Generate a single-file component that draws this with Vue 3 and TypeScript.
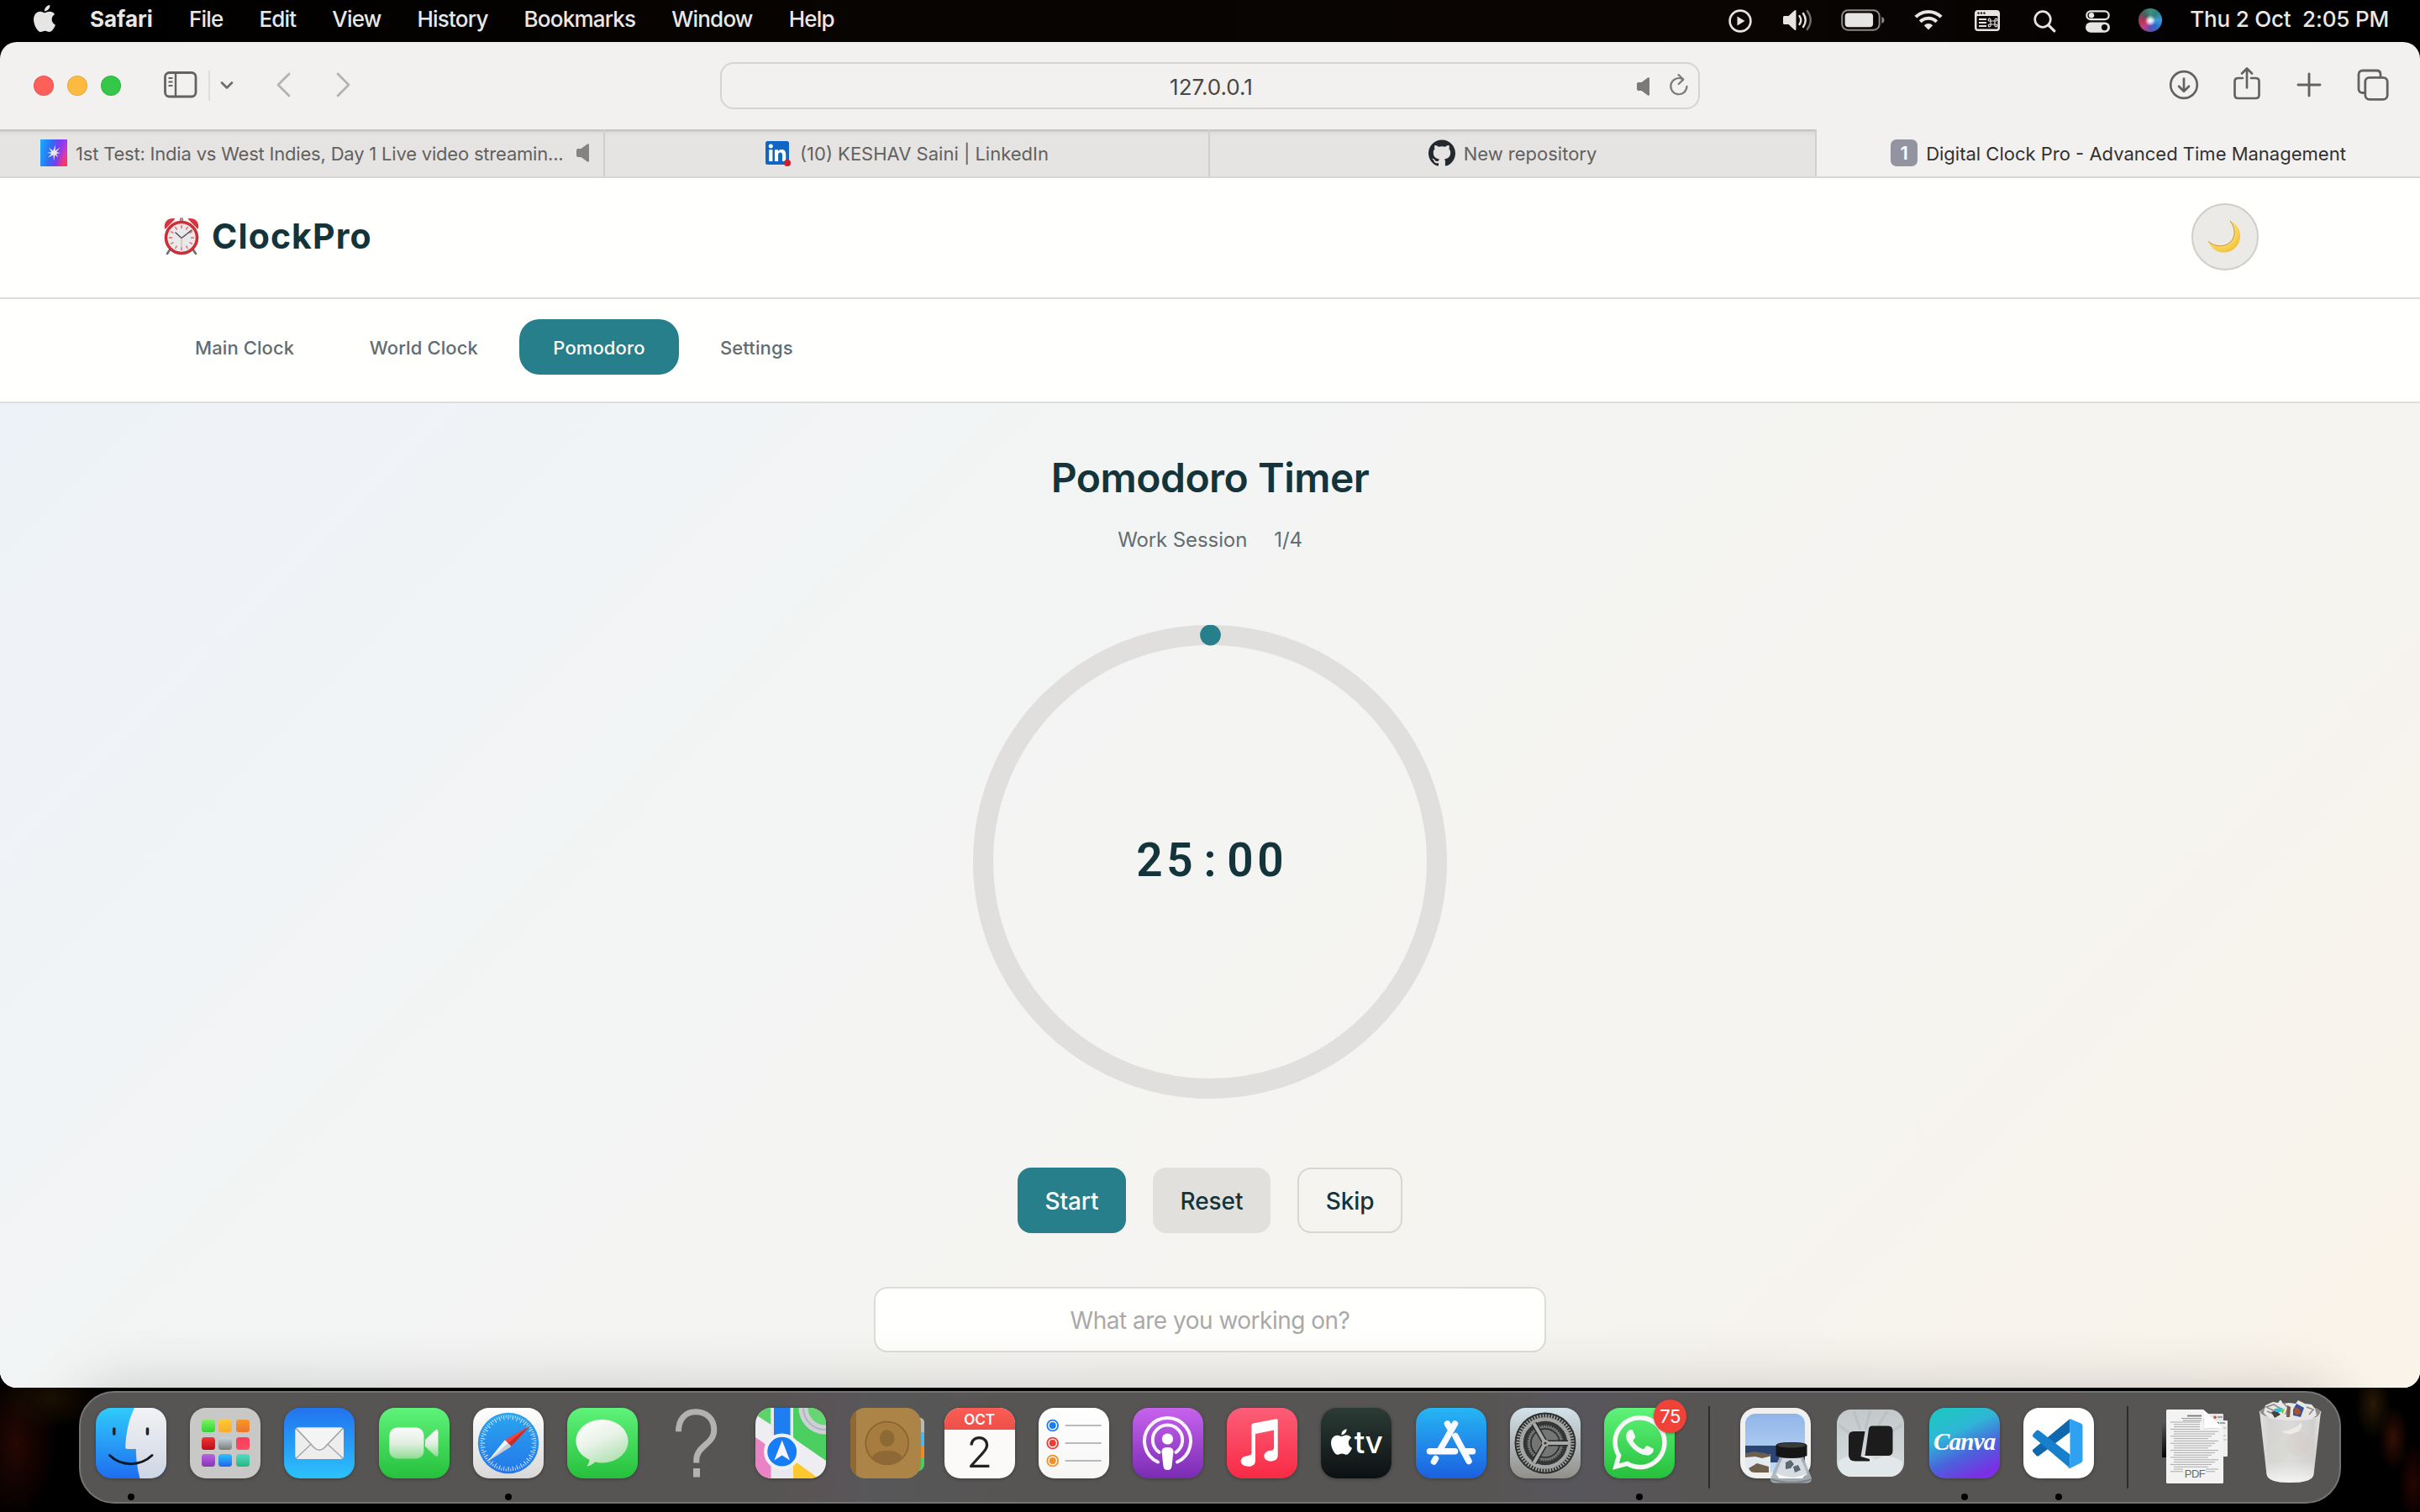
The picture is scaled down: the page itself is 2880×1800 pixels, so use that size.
<script setup lang="ts">
interface NavTab {
  label: string
  active?: boolean
}

const menus: string[] = ['File', 'Edit', 'View', 'History', 'Bookmarks', 'Window', 'Help']

const navTabs: NavTab[] = [
  { label: 'Main Clock' },
  { label: 'World Clock' },
  { label: 'Pomodoro', active: true },
  { label: 'Settings' },
]

const timeDigits: string[] = '25:00'.split('')

const launchpad: string[] = [
  'lime', 'amber', 'orange',
  'red', 'steel', 'pink',
  'violet', 'blue', 'teal',
]

// Tick marks round the compass dial
const compassTicks: number[] = Array.from({ length: 72 }, (_, i) => i * 5)
const alarmTicks: number[] = Array.from({ length: 12 }, (_, i) => i * 30)
const docLines: number[] = Array.from({ length: 22 }, (_, i) => 12 + i * 2.8)

const applePath =
  'M12.152 6.896c-.948 0-2.415-1.078-3.96-1.04-2.04.027-3.91 1.183-4.961 3.014-2.117 3.675-.546 9.103 1.519 12.09 1.013 1.454 2.208 3.09 3.792 3.039 1.52-.065 2.09-.987 3.935-.987 1.831 0 2.35.987 3.96.948 1.637-.026 2.676-1.48 3.676-2.948 1.156-1.688 1.636-3.325 1.662-3.415-.039-.013-3.182-1.221-3.22-4.857-.026-3.04 2.48-4.494 2.597-4.559-1.429-2.09-3.623-2.324-4.39-2.376-2-.156-3.675 1.09-4.61 1.09zM15.53 3.83c.843-1.012 1.4-2.427 1.245-3.83-1.207.052-2.662.805-3.532 1.818-.78.896-1.454 2.338-1.273 3.714 1.338.104 2.715-.688 3.559-1.701'
const githubPath =
  'M12 .297c-6.63 0-12 5.373-12 12 0 5.303 3.438 9.8 8.205 11.385.6.113.82-.258.82-.577 0-.285-.01-1.04-.015-2.04-3.338.724-4.042-1.61-4.042-1.61C4.422 18.07 3.633 17.7 3.633 17.7c-1.087-.744.084-.729.084-.729 1.205.084 1.838 1.236 1.838 1.236 1.07 1.835 2.809 1.305 3.495.998.108-.776.417-1.305.76-1.605-2.665-.3-5.466-1.332-5.466-5.93 0-1.31.465-2.38 1.235-3.22-.135-.303-.54-1.523.105-3.176 0 0 1.005-.322 3.3 1.23.96-.267 1.98-.399 3-.405 1.02.006 2.04.138 3 .405 2.28-1.552 3.285-1.23 3.285-1.23.645 1.653.24 2.873.12 3.176.765.84 1.23 1.91 1.23 3.22 0 4.61-2.805 5.625-5.475 5.92.42.36.81 1.096.81 2.22 0 1.606-.015 2.896-.015 3.286 0 .315.21.69.825.57C20.565 22.092 24 17.592 24 12.297c0-6.627-5.373-12-12-12'
const whatsappPath =
  'M17.472 14.382c-.297-.149-1.758-.867-2.03-.967-.273-.099-.471-.148-.67.15-.197.297-.767.966-.94 1.164-.173.199-.347.223-.644.075-.297-.15-1.255-.463-2.39-1.475-.883-.788-1.48-1.761-1.653-2.059-.173-.297-.018-.458.13-.606.134-.133.298-.347.446-.52.149-.174.198-.298.298-.497.099-.198.05-.371-.025-.52-.075-.149-.669-1.612-.916-2.207-.242-.579-.487-.5-.669-.51-.173-.008-.371-.01-.57-.01-.198 0-.52.074-.792.372-.272.297-1.04 1.016-1.04 2.479 0 1.462 1.065 2.875 1.213 3.074.149.198 2.096 3.2 5.077 4.487.709.306 1.262.489 1.694.625.712.227 1.36.195 1.871.118.571-.085 1.758-.719 2.006-1.413.248-.694.248-1.289.173-1.413-.074-.124-.272-.198-.57-.347m-5.421 7.403h-.004a9.87 9.87 0 01-5.031-1.378l-.361-.214-3.741.982.998-3.648-.235-.374a9.86 9.86 0 01-1.51-5.26c.001-5.45 4.436-9.884 9.888-9.884 2.64 0 5.122 1.03 6.988 2.898a9.825 9.825 0 012.893 6.994c-.003 5.45-4.437 9.884-9.885 9.884m8.413-18.297A11.815 11.815 0 0012.05 0C5.495 0 .16 5.335.157 11.892c0 2.096.547 4.142 1.588 5.945L.057 24l6.305-1.654a11.882 11.882 0 005.683 1.448h.005c6.554 0 11.89-5.335 11.893-11.893a11.821 11.821 0 00-3.48-8.413Z'
</script>

<template>
  <div class="screen">
    <!-- macOS menu bar -->
    <header class="menubar">
      <svg class="apple" viewBox="2.2 0 19.6 24" preserveAspectRatio="none"><path :d="applePath" fill="#e6e5e4" /></svg>
      <nav class="menus">
        <span class="menu app">Safari</span>
        <span v-for="m in menus" :key="m" class="menu">{{ m }}</span>
      </nav>
      <div class="status">
        <svg class="st play" viewBox="0 0 28 28">
          <circle cx="14" cy="14" r="12.4" fill="none" stroke="#e6e5e4" stroke-width="2.6" />
          <path d="M10.5 8.6v10.8l9-5.4z" fill="#e6e5e4" />
        </svg>
        <svg class="st volume" viewBox="0 0 38 28">
          <path d="M1 10.5q0-1.5 1.5-1.5h5l7-6.4q2-1.4 2 .9v21q0 2.300-2 .9l-7-6.400h-5q-1.500 0-1.500-1.500z" fill="#e6e5e4" />
          <path d="M20.500 9q3.500 5 0 10M25 6q5.500 8 0 16" fill="none" stroke="#e6e5e4" stroke-width="2.400" stroke-linecap="round" />
          <path d="M29.800 3q8 11 0 22" fill="none" stroke="#6e6c6a" stroke-width="2.400" stroke-linecap="round" />
        </svg>
        <svg class="st battery" viewBox="0 0 52 26">
          <rect x="1.200" y="1.200" width="44.500" height="23.500" rx="7" fill="none" stroke="#8b8987" stroke-width="2" />
          <rect x="4.600" y="4.600" width="33.500" height="16.700" rx="4" fill="#e6e5e4" />
          <path d="M48.300 9q3.200 1.200 3.200 4t-3.200 4z" fill="#8b8987" />
        </svg>
        <svg class="st wifi" viewBox="0 0 34 25">
          <g fill="none" stroke="#e6e5e4" stroke-width="4">
            <path d="M1.800 9.200a21.500 21.500 0 0 1 30.400 0" />
            <path d="M7.300 14.800a13.700 13.700 0 0 1 19.400 0" />
          </g>
          <path d="M17 24.500l-5.200-5.300a7.400 7.400 0 0 1 10.400 0z" fill="#e6e5e4" />
        </svg>
        <svg class="st keys" viewBox="0 0 30 25">
          <rect width="30" height="25" rx="4" fill="#e6e5e4" />
          <rect x="2.500" y="7" width="25" height="15.500" rx="1" fill="#0a0503" />
          <circle cx="4.500" cy="3.600" r="1.200" fill="#0a0503" /><circle cx="8" cy="3.600" r="1.200" fill="#0a0503" /><circle cx="11.500" cy="3.600" r="1.200" fill="#0a0503" />
          <path d="M5 11h9M5 15h9M5 19h9" stroke="#e6e5e4" stroke-width="2" />
          <path d="M19 13h5v4h-5zM19 13h-1.200a1.400 1.400 0 1 1 1.200-1.400zM24 13h1.200a1.400 1.400 0 1 0-1.200-1.400zM19 17h-1.200a1.400 1.400 0 1 0 1.200 1.400zM24 17h1.200a1.400 1.400 0 1 1-1.200 1.400z" fill="none" stroke="#e6e5e4" stroke-width="1.200" />
        </svg>
        <svg class="st search" viewBox="0 0 27 27">
          <circle cx="11" cy="11" r="9.300" fill="none" stroke="#e6e5e4" stroke-width="2.700" />
          <path d="M17.800 17.800l7 7" stroke="#e6e5e4" stroke-width="3.200" stroke-linecap="round" />
        </svg>
        <svg class="st toggles" viewBox="0 0 29 27">
          <rect x="1.300" y="1.300" width="26.400" height="9.800" rx="4.900" fill="none" stroke="#e6e5e4" stroke-width="2.200" />
          <circle cx="7" cy="6.200" r="3.200" fill="#e6e5e4" />
          <rect y="14.500" width="29" height="12.300" rx="6.150" fill="#e6e5e4" />
          <circle cx="22.500" cy="20.600" r="3.600" fill="#0a0503" />
        </svg>
        <span class="siri"></span>
        <span class="clock">Thu 2 Oct&nbsp; 2:05 PM</span>
      </div>
    </header>

    <!-- Safari window -->
    <section class="window">
      <div class="toolbar">
        <div class="lights"><i class="r"></i><i class="y"></i><i class="g"></i></div>
        <svg class="sidebar" viewBox="0 0 40 32">
          <rect x="1.500" y="1.500" width="36.500" height="28.500" rx="5" fill="none" stroke="#636261" stroke-width="2.800" />
          <path d="M14 2v28" stroke="#636261" stroke-width="2.400" />
          <path d="M5.500 8h5M5.500 12.500h5M5.500 17h5" stroke="#636261" stroke-width="1.800" />
        </svg>
        <span class="vline"></span>
        <svg class="chev" viewBox="0 0 16 12"><path d="M2 2.500l6 6 6-6" fill="none" stroke="#6f6e75" stroke-width="2.800" stroke-linecap="round" stroke-linejoin="round" /></svg>
        <svg class="back" viewBox="0 0 18 30"><path d="M16 2L3 15l13 13" fill="none" stroke="#b3b2b0" stroke-width="2.800" stroke-linecap="round" stroke-linejoin="round" /></svg>
        <svg class="fwd" viewBox="0 0 18 30"><path d="M2 2l13 13L2 28" fill="none" stroke="#b3b2b0" stroke-width="2.800" stroke-linecap="round" stroke-linejoin="round" /></svg>
        <div class="url">
          <span class="host">127.0.0.1</span>
          <div class="url-tools">
            <svg class="mute" viewBox="0 0 15 22"><path d="M0 8q0-2 2-2h3.500l7.500-5.500q2-1 2 1v19q0 2-2 1l-7.500-5.500H2q-2 0-2-2z" fill="#7b7a79" /></svg>
            <svg class="reload" viewBox="0 0 24 27">
              <path d="M16.500 6.200a9.600 9.600 0 1 0 5 8.600" fill="none" stroke="#7b7a79" stroke-width="2.200" stroke-linecap="round" />
              <path d="M11.500 1l5.800 5.600-5.600 5.400" fill="none" stroke="#7b7a79" stroke-width="2.200" stroke-linecap="round" stroke-linejoin="round" />
            </svg>
          </div>
        </div>
        <div class="actions">
          <svg class="a1" viewBox="0 0 36 36" fill="none" stroke="#636261" stroke-width="2.700" stroke-linecap="round" stroke-linejoin="round">
            <circle cx="18" cy="18" r="15.800" /><path d="M18 10.500v15M12 19.800l6 6 6-6" />
          </svg>
          <svg class="a2" viewBox="0 0 34 40" fill="none" stroke="#636261" stroke-width="2.700" stroke-linecap="round" stroke-linejoin="round">
            <path d="M12 14H6.500q-4 0-4 4v16q0 4 4 4h21q4 0 4-4V18q0-4-4-4H22M17 25.500V2.500M11 8.500l6-6 6 6" />
          </svg>
          <svg class="a3" viewBox="0 0 30 30" stroke="#636261" stroke-width="2.900" stroke-linecap="round"><path d="M15 2v26M2 15h26" /></svg>
          <svg class="a4" viewBox="0 0 38 38" fill="none" stroke="#636261" stroke-width="2.800" stroke-linejoin="round">
            <path d="M9.500 28.500H7q-5 0-5-5V7q0-5 5-5h16.500q4.500 0 4.500 4.500V9" /><rect x="9.800" y="10.300" width="26.400" height="26" rx="5" />
          </svg>
        </div>
      </div>

      <div class="tabs">
        <div class="tab t1">
          <span class="fav hotstar">
            <svg viewBox="0 0 32 32"><path d="M18 6.500l-.3 7 5.800-4-4.300 5.600 4.600 1-4.800 1.200 2.400 4-4-2.800-1.400 7-.5-7L9 21.500l4.200-4.500-5.200-1.200 5.200-.8-3-5 5 3.500z" fill="#ece6e8" /></svg>
          </span>
          <span class="tt">1st Test: India vs West Indies, Day 1 Live video streamin...</span>
          <svg class="mute tab-mute" viewBox="0 0 15 22"><path d="M0 8q0-2 2-2h3.500l7.500-5.500q2-1 2 1v19q0 2-2 1l-7.500-5.500H2q-2 0-2-2z" fill="#848382" /></svg>
        </div>
        <div class="tab t2">
          <svg class="fav linkedin" viewBox="0 0 32 32">
            <rect x="1" y="2" width="28" height="28" rx="2.500" fill="#0f66c3" />
            <circle cx="7.300" cy="8" r="2.500" fill="#fff" />
            <path d="M5.200 12.300h4.200V26H5.200zM12 12.300h4v1.900c1-1.500 2.300-2.200 4.200-2.200 3.800 0 5 2.400 5 6.200V26H21v-7c0-2-.5-3.400-2.300-3.400-1.900 0-2.600 1.400-2.600 3.400v7H12z" fill="#fff" />
            <circle cx="27" cy="28" r="4" fill="#cf2027" />
          </svg>
          <span class="tt">(10) KESHAV Saini | LinkedIn</span>
        </div>
        <div class="tab t3">
          <svg class="fav github" viewBox="0 0 24 24"><path :d="githubPath" fill="#24292f" /></svg>
          <span class="tt">New repository</span>
        </div>
        <div class="tab t4">
          <span class="fav one">1</span>
          <span class="tt">Digital Clock Pro - Advanced Time Management</span>
        </div>
      </div>

      <!-- ClockPro page -->
      <div class="page">
        <div class="brandbar">
          <div class="brand">
            <svg class="alarm" viewBox="0 0 44 46">
              <path d="M9 38l-4 6M35 38l4 6" stroke="#6d6e72" stroke-width="2.600" stroke-linecap="round" />
              <path d="M20.500 5V1.800h3V5" fill="#c9a7a9" stroke="#b06a6e" />
              <path d="M2.500 15C-.5 7.500 6 0 14.500 2.500z" fill="#d8343f" /><path d="M41.500 15C44.500 7.500 38 0 29.500 2.500z" fill="#d8343f" />
              <circle cx="22" cy="25" r="18.400" fill="#e9e9e9" stroke="#cf2f39" stroke-width="3.400" />
              <circle cx="22" cy="25" r="20" fill="none" stroke="#8f1b24" stroke-width=".8" opacity=".5" />
              <path v-for="a in alarmTicks" :key="a" d="M22 10v4" :transform="`rotate(${a} 22 25)`" stroke="#e0565e" stroke-width="1.300" />
              <path d="M22 25.500l-7-6.500M22 25.500L34 16" stroke="#4c4d52" stroke-width="1.500" stroke-linecap="round" />
              <path d="M22 25v12" stroke="#cfa9a0" stroke-width="1" />
            </svg>
            <span class="brand-name">ClockPro</span>
          </div>
          <button class="theme">
            <svg viewBox="0 0 40 40">
              <defs><radialGradient id="moonFill" cx=".35" cy=".3" r=".8"><stop offset=".5" stop-color="#fbe07a" /><stop offset=".8" stop-color="#f5cb45" /><stop offset="1" stop-color="#edb83a" /></radialGradient></defs>
              <path d="M27 .8C38.500 6 42.500 19.500 36 29.500 28.500 41.500 8.500 43 1 25.500 9.500 32.500 20.500 32.500 27.500 26 34 19.500 33.500 9.500 27 .8z" fill="url(#moonFill)" />
              <path d="M27 .8C33.500 9.500 34 19.500 27.500 26 20.500 32.500 9.500 32.500 1 25.500" fill="none" stroke="#c99239" stroke-width="1" />
            </svg>
          </button>
        </div>

        <nav class="pagenav">
          <button v-for="t in navTabs" :key="t.label" class="navbtn" :class="{ active: t.active }">{{ t.label }}</button>
        </nav>

        <main class="main">
          <h1 class="title">Pomodoro Timer</h1>
          <p class="session"><span class="s1">Work Session</span><span class="s2">1/4</span></p>
          <div class="ring">
            <svg viewBox="0 0 564 564">
              <circle cx="282" cy="282" r="270" fill="none" stroke="#e0dfdd" stroke-width="24" />
              <circle cx="282.500" cy="12" r="12.400" fill="#277f8b" />
            </svg>
            <div class="time"><span v-for="(d, i) in timeDigits" :key="i" class="digit">{{ d }}</span></div>
          </div>
          <div class="controls">
            <button class="btn start">Start</button>
            <button class="btn reset">Reset</button>
            <button class="btn skip">Skip</button>
          </div>
          <input class="task" type="text" placeholder="What are you working on?" />
        </main>
      </div>
    </section>

    <!-- Dock -->
    <footer class="dock">
      <div class="icon finder running">
        <svg viewBox="0 0 84 84">
          <defs>
            <linearGradient id="fl" x2="0" y2="1"><stop stop-color="#2fcbfb" /><stop offset="1" stop-color="#1f6df1" /></linearGradient>
            <linearGradient id="fr" x2="0" y2="1"><stop stop-color="#f3f2f5" /><stop offset="1" stop-color="#cdd6e4" /></linearGradient>
          </defs>
          <rect width="84" height="84" rx="19" fill="url(#fl)" />
          <path d="M46 0H65a19 19 0 0 1 19 19V65a19 19 0 0 1-19 19H52.500C49.500 72 48 62 47.800 49H37.500Q35 49 35.200 46C36 28 40 12 46 0z" fill="url(#fr)" />
          <path d="M21.800 25v6M61.500 25v6" stroke="#20242c" stroke-width="3.600" stroke-linecap="round" />
          <path d="M16.500 56.500C30 70 53 70 67 56.500" fill="none" stroke="#14181f" stroke-width="3" stroke-linecap="round" />
        </svg>
      </div>
      <div class="icon launch">
        <div class="grid9"><i v-for="c in launchpad" :key="c" :class="c"></i></div>
      </div>
      <div class="icon mail">
        <svg viewBox="0 0 84 84">
          <rect x="13.300" y="23.300" width="57.700" height="37.700" rx="4" fill="#ededed" />
          <path d="M14.500 60L34 41.500M70 60L50 41.500" stroke="#a5a6a8" stroke-width="1.400" />
          <path d="M14.500 24.500L36 47.500Q42 53 48 47.500L70 24.500" fill="#f4f4f4" stroke="#9fa1a4" stroke-width="1.600" />
        </svg>
      </div>
      <div class="icon facetime">
        <svg viewBox="0 0 84 84">
          <defs><linearGradient id="ftg" x2="0" y2="1"><stop stop-color="#fafafa" /><stop offset=".5" stop-color="#e3efe2" /><stop offset="1" stop-color="#8fdc92" /></linearGradient></defs>
          <rect x="12.400" y="23.500" width="41" height="37" rx="9" fill="url(#ftg)" />
          <path d="M55 38L66 27.500Q70.500 24 70.500 29v26q0 5-4.500 1.500L55 46z" fill="url(#ftg)" />
        </svg>
      </div>
      <div class="icon safari running">
        <svg viewBox="0 0 84 84">
          <defs><linearGradient id="sfg" x2="0" y2="1"><stop stop-color="#2aa5ee" /><stop offset="1" stop-color="#2477ea" /></linearGradient></defs>
          <circle cx="42" cy="42" r="36.200" fill="url(#sfg)" />
          <path v-for="a in compassTicks" :key="a" :d="a % 10 ? 'M42 8.500v3' : 'M42 8.500v5.500'" :transform="`rotate(${a} 42 42)`" stroke="#d3e9fb" stroke-width="1" />
          <path d="M68 21L37.800 38.200l7.600 7.600z" fill="#f0433c" />
          <path d="M17.500 63.500l20.300-25.300 7.600 7.600z" fill="#f1f3f5" />
          <path d="M45.400 45.800L68 21 41.600 42z" fill="#c22d2d" /><path d="M17.500 63.500L41.600 42l3.800 3.800z" fill="#c9ced4" />
        </svg>
      </div>
      <div class="icon messages">
        <svg viewBox="0 0 84 84">
          <defs><linearGradient id="msg" x1=".2" x2=".7" y2="1"><stop stop-color="#fcfdfc" /><stop offset=".45" stop-color="#e9f3e8" /><stop offset="1" stop-color="#a9dfab" /></linearGradient></defs>
          <path d="M41.500 14C58.500 14 72.500 25 72.500 39.700S58.500 65.400 41.500 65.400q-4.500 0-8.500-.9-4 4.400-10 4.900 3.500-3.200 3.400-7.600C16.800 57.300 10.500 49.200 10.500 39.700 10.500 25 24.500 14 41.500 14z" fill="url(#msg)" />
        </svg>
      </div>
      <div class="icon missing">
        <svg viewBox="0 0 84 84">
          <path d="M20.500 28.300C20.500 13.500 28.500 4.800 41 4.800S62.800 13 62.800 26.500C62.800 43.500 41.800 45 41.800 62v3.500" fill="none" stroke="#b3b2b1" stroke-width="7" />
          <rect x="38" y="72" width="8" height="10.500" fill="#b3b2b1" />
        </svg>
      </div>
      <div class="icon maps">
        <svg viewBox="0 0 84 84">
          <rect width="84" height="84" fill="#eeeef2" />
          <path d="M0 0h18.500v20L0 8z" fill="#5cd36a" />
          <path d="M45 0h39v63L45 36z" fill="#4ccf61" />
          <path d="M0 35l20 14v35H0z" fill="#ea83c6" />
          <path d="M45 62l30 22H45z" fill="#fbc92e" />
          <circle cx="83" cy="0" r="26" fill="#66d673" stroke="#cfcfd6" stroke-width="11" />
          <circle cx="83" cy="0" r="26" fill="none" stroke="#b3b3bd" stroke-width="2" />
          <rect x="18.500" width="26.500" height="84" fill="#e8e8ee" />
          <rect x="22" width="19.500" height="40" fill="#1f7df2" />
          <circle cx="31.700" cy="52.200" r="19.500" fill="#167df6" stroke="#f1f1f4" stroke-width="4.200" />
          <path d="M31.700 38.500L41 62.500l-9.300-6-9.300 6z" fill="#f6f6f8" />
        </svg>
      </div>
      <div class="icon contacts">
        <svg class="wide" viewBox="0 0 90 84">
          <path d="M80 11q8 1 8 6v12h-8z" fill="#b9b9b2" /><path d="M80 29h8v16h-8z" fill="#4cb9ea" /><path d="M80 45h8v15h-8z" fill="#f28a20" /><path d="M80 60h8v8q0 5-8 8z" fill="#46cf60" />
          <rect width="84" height="84" rx="18" fill="#ad8448" />
          <path d="M7 4v76Q0 76 0 66V18Q0 8 7 4z" fill="#8f6934" />
          <circle cx="43.700" cy="42" r="25.500" fill="#a67c41" stroke="#85622f" stroke-width="1.600" />
          <ellipse cx="43.700" cy="36.300" rx="8.800" ry="10" fill="#8d6935" />
          <path d="M25.500 60Q28 51 43.700 51T62 60Q55 68 43.700 68T25.500 60z" fill="#8d6935" />
        </svg>
      </div>
      <div class="icon calendar"><div class="cal-head">OCT</div><div class="cal-day">2</div></div>
      <div class="icon reminders">
        <svg viewBox="0 0 84 84">
          <g fill="none" stroke-width="1.800"><circle cx="16.700" cy="21" r="6.400" stroke="#1a7cf3" /><circle cx="16.700" cy="42" r="6.400" stroke="#ee3b36" /><circle cx="16.700" cy="63" r="6.400" stroke="#f19125" /></g>
          <circle cx="16.700" cy="21" r="4" fill="#1a7cf3" /><circle cx="16.700" cy="42" r="4" fill="#ee3b36" /><circle cx="16.700" cy="63" r="4" fill="#f19125" />
          <path d="M31.700 21h43M31.700 42h43M31.700 63h43" stroke="#b9b8bd" stroke-width="1.800" />
        </svg>
      </div>
      <div class="icon podcasts">
        <svg viewBox="0 0 84 84">
          <g fill="none" stroke="#fbf5fe" stroke-width="4" stroke-linecap="round">
            <path d="M30 64.500A27.500 27.500 0 1 1 53 64.500" /><path d="M31.500 52.800A17.700 17.700 0 1 1 51.500 52.800" />
          </g>
          <circle cx="41.500" cy="37" r="6.600" fill="#fff" />
          <path d="M34.500 52q0-5 7-5t7 5l-2 17.500q-.5 4.500-5 4.500t-5-4.500z" fill="#fff" />
        </svg>
      </div>
      <div class="icon music">
        <svg viewBox="0 0 84 84">
          <path d="M29.400 20.800q0-1.700 1.800-2.200l27.500-5.300q2-.3 2 1.600v41.500c0 5-4 7-8.200 7-4.800 0-8.100-2.500-8.100-6 0-3.300 2.700-5.600 6.200-6.300l3.600-.7q1.900-.4 1.900-2.400V26.500L34 31v32c0 4.600-3.800 6.800-8.200 6.800-5 0-9.100-2.300-9.100-6.200 0-3.400 2.700-5.500 6.200-6.200l4-.8q2.500-.5 2.500-2.900z" fill="#fff" />
        </svg>
      </div>
      <div class="icon tv">
        <svg class="tv-apple" viewBox="2.200 0 19.600 24"><path :d="applePath" fill="#fff" /></svg><span class="tv-text">tv</span>
      </div>
      <div class="icon appstore">
        <svg viewBox="0 0 84 84" stroke="#f7fbff" stroke-width="7.500" stroke-linecap="round" fill="none">
          <path d="M46.500 19L29 49.500M37.500 19L41 25M47 33.500L63 63.500M23.500 60.500l-2 3.500" /><path d="M16.500 51.800h30M57 51.800h10.500" />
        </svg>
      </div>
      <div class="icon settings">
        <svg viewBox="0 0 84 84">
          <circle cx="42" cy="42" r="36.500" fill="#2d2e2e" />
          <circle cx="42" cy="42" r="32.500" fill="none" stroke="#a5a7a6" stroke-width="4" stroke-dasharray="1.700 1.700" />
          <circle cx="42" cy="42" r="28.500" fill="#343535" stroke="#a3a5a4" stroke-width="4.500" />
          <circle cx="42" cy="42" r="20" fill="#676867" stroke="#7d7f7e" stroke-width="3" stroke-dasharray="1.500 1.200" />
          <circle cx="42" cy="42" r="17" fill="#757674" stroke="#2b2b2b" stroke-width="1.600" />
          <path d="M42 42h27M42 42L28.500 18.500M42 42L28.500 65.500" stroke="#292a2a" stroke-width="7" />
          <path d="M42 42h27M42 42L28.500 18.500M42 42L28.500 65.500" stroke="#a8aaa9" stroke-width="4" />
          <circle cx="42" cy="42" r="4" fill="#a8aaa9" /><circle cx="42" cy="42" r="1.600" fill="#2b2b2b" />
        </svg>
      </div>
      <div class="icon whatsapp running">
        <svg viewBox="0 0 84 84"><g transform="translate(10 9) scale(2.700)"><path :d="whatsappPath" fill="#f6f7f6" /></g></svg>
        <span class="badge">75</span>
      </div>
      <span class="sep"></span>
      <div class="icon preview">
        <svg class="tall" viewBox="0 0 88 92">
          <defs>
            <linearGradient id="sky" x2="0" y2="1"><stop stop-color="#8fb5ea" /><stop offset="1" stop-color="#c4dbf5" /></linearGradient>
            <clipPath id="photo"><rect x="6" y="7" width="71" height="70" rx="12" /></clipPath>
          </defs>
          <g clip-path="url(#photo)">
            <rect x="6" y="7" width="71" height="70" fill="url(#sky)" />
            <path d="M6 45h71v20H6z" fill="#2a4574" />
            <path d="M6 57q8-4 16 0t14-2v23H6z" fill="#e4ebf0" />
            <path d="M6 54l10-2 14 2 8 3-12 3-8-2-12 1zM10 72l10-6 14 4v8H14z" fill="#6f5f4d" />
          </g>
          <path d="M47 58h28l10 26q.5 5-6 5.500H42q-7-.500-6-5.500z" fill="#a9b3ba" opacity=".9" />
          <path d="M50 60h22l8 20q-20 6-38 0z" fill="#dde3e6" opacity=".85" />
          <path d="M54 65l6-3 4 5-4 5-6 1zM63 70l6-2 3 6-7 3z" fill="#5d6872" />
          <path d="M43 78q18 9 35 1l-4 5H46z" fill="#fff" />
          <path d="M37 85q24 8 48 0" stroke="#7b8388" stroke-width="2" fill="none" />
          <path d="M42.500 45q0-4 18.500-4t18.500 4v12q-6 3-18.500 3t-18.500-3z" fill="#151515" />
          <ellipse cx="61" cy="44.500" rx="17" ry="3" fill="#3a3a3a" />
        </svg>
      </div>
      <div class="icon cards">
        <div class="cards-tile">
          <svg viewBox="0 0 80 80">
            <path d="M2 62Q12 52 22 60 36 50 46 60 60 50 78 62V66Q76 80 62 80H18Q4 80 2 66z" fill="#e2e7ea" />
            <path d="M40 0L34 24M20 2L28 24M60 2L48 22M2 18L20 32M78 18L62 28" stroke="#b2b7ba" stroke-width="3" opacity=".5" />
            <path d="M20 26h13.500L28.500 56l10.500 3v2.500H22Q14 61.500 14 54V32q0-6 6-6z" fill="#1c1c1c" />
            <path d="M42 19.500h19q5.500 0 5.500 6V49q0 6-6 6H33.500L38 23q.500-3.500 4-3.500z" fill="#1c1c1c" />
          </svg>
        </div>
      </div>
      <div class="icon canva running"><span>Canva</span></div>
      <div class="icon vscode running">
        <svg viewBox="0 0 84 84">
          <path d="M55.500 13L11.500 49.500q-1.500 1.500 0 3l4 4.500q1.500 1 3 0L55.500 29z" fill="#0f68ad" />
          <path d="M55.500 72L11.500 34.500q-1.500-1.500 0-3l4-4.500q1.500-1 3 0L55.500 55.500z" fill="#1780cc" />
          <path d="M55.500 13l13 5.500q2 1 2 3v41q0 2-2 3l-13 6.500q-1.500 0-2.500-1.500l2.500-3z" fill="#2ea1f0" />
        </svg>
      </div>
      <span class="sep sep2"></span>
      <div class="icon docs">
        <svg class="tall" viewBox="0 0 84 92">
          <defs><linearGradient id="backdoc" x2="0" y2="1"><stop stop-color="#5a5a5a" /><stop offset="1" stop-color="#050505" /></linearGradient></defs>
          <rect x="3" y="15" width="10" height="44" fill="url(#backdoc)" />
          <rect x="40" y="7" width="36" height="55" rx="1" fill="#e5e5e4" />
          <rect x="44" y="15" width="37" height="43" rx="1" fill="#efefee" />
          <path d="M72 18h6M69 11h6" stroke="#9aa0b0" stroke-width="2" />
          <circle cx="69.500" cy="18.500" r="1.800" fill="#3f9a5c" /><circle cx="66" cy="11.300" r="1.800" fill="#c9553f" />
          <path d="M74 24h6M74 33h5M74 38h6" stroke="#b5b5b5" stroke-width="1" />
          <path d="M9.500 2H52L76 25V88.500q0 1.500-1.500 1.500H9.500Q8 90 8 88.500v-85Q8 2 9.500 2z" fill="#f3f3f3" />
          <path d="M33 9.500h17" stroke="#777" stroke-width="1.800" /><path d="M26 12.500h24M28 15h22" stroke="#999" stroke-width="1" />
          <path v-for="(y, i) in docLines" :key="y" :d="`M${i % 3 ? 17 : 13} ${y + 5}H${i < 4 ? 48 : 70 - (i % 4) * 4}`" stroke="#a9a9a9" stroke-width="1" />
          <path d="M52 12q1 10 .5 14 12-2 23.500-1L60 20z" fill="#d2d2d2" />
          <path d="M52 2q10 8 24 23-12-2-23.500 0 1.500-12-.5-23z" fill="#fdfdfd" />
          <rect x="28" y="72" width="27" height="12" fill="#f3f3f3" />
          <text x="42" y="82.500" text-anchor="middle" class="pdf">PDF</text>
        </svg>
      </div>
      <div class="icon trash">
        <svg class="bin" viewBox="0 0 84 100">
          <defs>
            <linearGradient id="bin"><stop stop-color="#dedddb" /><stop offset=".15" stop-color="#cfcecc" /><stop offset=".5" stop-color="#d6d5d4" /><stop offset=".88" stop-color="#cac9c7" /><stop offset="1" stop-color="#e4e3e2" /></linearGradient>
            <linearGradient id="binFade" x2="0" y2="1"><stop stop-color="#fff" stop-opacity=".1" /><stop offset=".7" stop-color="#fff" stop-opacity=".15" /><stop offset="1" stop-color="#fff" stop-opacity=".75" /></linearGradient>
          </defs>
          <ellipse cx="42.500" cy="14" rx="36.500" ry="8.500" fill="#8f8e8d" />
          <path d="M11 15l2-9 9-4 6 1 3-4 3 5 7-1 8 1 3-4 8 4 8 1 4 5 2 8-8 6H20z" fill="#e6e6e4" />
          <path d="M14 8l9-3 8 5-9 2zM34 3l6 6-3 8M62 8l8 3-5 6M22 16l-7-3" stroke="#8d8c8b" stroke-width="1.600" fill="none" />
          <path d="M20 14l6-2 5 5-7 4z" fill="#4a403c" /><path d="M24 10l10-1-3 5h-6z" fill="#27c4e0" /><path d="M30 12l6-2-2 6z" fill="#76c943" />
          <path d="M46 11l4-7 9 5-4 11-9-2z" fill="#31549b" /><path d="M48 8l5 2 3 5-6 3-3-4z" fill="#b04e2b" />
          <path d="M39 6l4 2-1 12h-4z" fill="#7b5a4a" />
          <path d="M6 13Q7 22 42.500 23.500T79 13L70.500 88q-.8 10-28 10t-28-10z" fill="url(#bin)" />
          <path d="M6 13Q7 22 42.500 23.500T79 13L70.500 88q-.8 10-28 10t-28-10z" fill="url(#binFade)" />
          <path d="M32 37q14 0 24-11 2 10-8 13-9 3-16-2z" fill="#f3f2f1" opacity=".7" />
          <ellipse cx="52" cy="52" rx="14" ry="14" fill="#d9c5bd" opacity=".25" /><ellipse cx="28" cy="60" rx="12" ry="14" fill="#d5dbc9" opacity=".25" />
          <path d="M6 13Q7 22 42.500 23.500T79 13" fill="none" stroke="#e9e8e7" stroke-width="1" />
        </svg>
      </div>
    </footer>
  </div>
</template>

<style>
html,
body {
  margin: 0;
  background: #000;
}
</style>

<style scoped>
* { box-sizing: border-box; }
button, input { font: inherit; margin: 0; }
svg { display: block; }
.screen {
  width: 2880px;
  height: 1800px;
  overflow: hidden;
  display: flex;
  flex-direction: column;
  font-family: Inter, "Liberation Sans", sans-serif;
  background:
    radial-gradient(ellipse 60px 40px at 60px 1665px, #1c1003 0, transparent 100%),
    radial-gradient(ellipse 50px 90px at 20px 1720px, #260703 0, transparent 100%),
    radial-gradient(ellipse 22px 42px at 2824px 1672px, #2a1a08 0, transparent 100%),
    radial-gradient(ellipse 18px 40px at 2848px 1712px, #351006 0, transparent 100%),
    radial-gradient(ellipse 18px 50px at 2872px 1765px, #260503 0, transparent 100%),
    #000;
}

.menubar {
  height: 50px;
  flex: none;
  display: flex;
  align-items: center;
  padding: 0 37px 0 40px;
  background: linear-gradient(90deg, #000 0, #060301 30%, #0a0503 70%, #000 100%);
  color: #e9e8e7;
  font-size: 26px;
  white-space: pre;
}
.apple { width: 26px; height: 32px; margin-top: -6px; }
.menus { display: flex; gap: 43px; margin-left: 41px; margin-top: -4px; font-weight: 500; letter-spacing: -0.8px; line-height: 40px; }
.menu.app { font-weight: 700; letter-spacing: 0; }
.status { margin-left: auto; display: flex; align-items: center; }
.st { flex: none; }
.play { width: 28px; height: 28px; margin-right: 36px; }
.volume { width: 38px; height: 28px; margin-right: 32px; margin-top: -2px; }
.battery { width: 52px; height: 26px; margin-right: 35px; margin-top: -2px; }
.wifi { width: 34px; height: 25px; margin-right: 38px; margin-top: -3px; }
.keys { width: 30px; height: 25px; margin-right: 40px; margin-top: -2px; }
.search { width: 27px; height: 27px; margin-right: 35px; }
.toggles { width: 29px; height: 27px; margin-right: 34px; }
.siri {
  width: 28px;
  height: 28px;
  border-radius: 50%;
  margin-right: 33px;
  margin-top: -2px;
  background:
    radial-gradient(circle at 50% 52%, #fff 0, rgba(255, 255, 255, .7) 14%, transparent 32%),
    conic-gradient(from 0deg, #3c8f78, #2f7f86, #3f9ad8, #2d6fc9, #5b50b5, #c23e7f, #b23455, #4a5b62, #3c8f78);
}
.clock { font-weight: 500; letter-spacing: -0.17px; margin-top: -4px; line-height: 40px; }

.window {
  height: 1602px;
  flex: none;
  border-radius: 20px;
  overflow: hidden;
  background: #f2f1ef;
  display: flex;
  flex-direction: column;
}
.toolbar { height: 104px; flex: none; display: flex; align-items: center; padding: 0 37px 0 40px; }
.toolbar > * { flex: none; }
.lights { display: flex; gap: 16px; }
.lights i { width: 24px; height: 24px; border-radius: 50%; border: 1px solid rgba(0, 0, 0, .1); }
.lights .r { background: #fe5f58; }
.lights .y { background: #febb40; }
.lights .g { background: #34c748; }
.sidebar { width: 40px; height: 32px; margin-left: 51px; margin-top: -2px; }
.vline { width: 2px; height: 36px; background: #dfdedc; margin-left: 13px; }
.chev { width: 16px; height: 12px; margin-left: 12px; }
.back { width: 18px; height: 30px; margin-left: 50px; margin-top: -2px; }
.fwd { width: 18px; height: 30px; margin-left: 54px; margin-top: -2px; }
.url {
  width: 1166px;
  height: 56px;
  margin-left: 439px;
  border: 2px solid #d5d4d1;
  border-radius: 16px;
  display: grid;
  grid-template-columns: 62px 1fr 62px 11px;
  align-items: center;
}
.host { grid-column: 2; text-align: center; font-size: 26px; letter-spacing: 0; color: #484746; line-height: 50px; padding-left: 14px; padding-top: 3px; }
.url-tools { grid-column: 3; display: flex; align-items: center; justify-content: space-between; }
.mute { width: 15px; height: 22px; flex: none; }
.reload { width: 24px; height: 27px; margin-top: -2px; }
.actions { margin-left: auto; display: flex; align-items: center; margin-top: -2px; }
.a1 { width: 36px; height: 36px; margin-right: 40px; }
.a2 { width: 34px; height: 40px; margin-right: 42px; margin-top: -4px; }
.a3 { width: 30px; height: 30px; margin-right: 42px; }
.a4 { width: 38px; height: 38px; margin-right: 0; }

.tabs { height: 58px; flex: none; display: flex; border-bottom: 2px solid #d8d7d5; }
.tab {
  display: flex;
  align-items: center;
  justify-content: center;
  background: linear-gradient(#c6c5c3 0, #c6c5c3 2px, #dddcda 3px, #e5e4e2 8px);
  border-right: 2px solid #d0cfcd;
  font-size: 22px;
  color: #626160;
  white-space: pre;
}
.t1 { width: 720px; justify-content: flex-start; padding-left: 48px; }
.t2 { width: 720px; }
.t3 { width: 722px; }
.t4 { flex: 1; background: transparent; border-right: 0; color: #323130; }
.fav { width: 32px; height: 32px; flex: none; margin-right: 10px; }
.tt { line-height: 30px; letter-spacing: 0; padding-top: 1px; }
.t1 .tt { letter-spacing: -0.2px; }
.hotstar { background: linear-gradient(100deg, #17b0fb 0%, #2f6df5 38%, #7a3df0 62%, transparent 85%), linear-gradient(180deg, #a03cf5 10%, #d836b8 50%, #fb356c 85%); }
.tab-mute { margin-left: 16px; }
.one { background: #9394a1; color: #fff; border-radius: 7px; display: flex; align-items: center; justify-content: center; font-weight: 600; font-size: 22px; }

.page { flex: 1; display: flex; flex-direction: column; background: #fffffd; color: #13343b; }
.brandbar { height: 144px; flex: none; display: flex; align-items: center; justify-content: space-between; padding: 0 192px 3px 194px; border-bottom: 2px solid #dfddd9; }
.brand { display: flex; align-items: center; padding-bottom: 2px; }
.alarm { width: 44px; height: 46px; }
.brand-name { margin-left: 14px; font-size: 41px; font-weight: 700; letter-spacing: 1.1px; line-height: 50px; }
.theme { width: 80px; height: 80px; border-radius: 50%; border: 2px solid #cfcec9; background: #ebeae7; padding: 0; display: flex; align-items: center; justify-content: center; }
.theme svg { width: 40px; height: 40px; margin-left: -2px; }
.pagenav { height: 124px; flex: none; display: flex; gap: 9.5px; padding: 24px 0 0 192px; border-bottom: 2px solid #dfddd9; }
.navbtn { height: 66px; padding: 2px 40px 0; border: 0; border-radius: 24px; background: transparent; color: #626c71; font-size: 22px; font-weight: 500; letter-spacing: 0.1px; }
.navbtn.active { background: #277f8b; color: #fcfcf9; }

.main {
  flex: 1;
  display: flex;
  flex-direction: column;
  align-items: center;
  background: linear-gradient(135deg, #edf2f8 0%, #f2f4f4 30%, #f4f4f2 52%, #f6f3ee 80%, #faf4e9 100%);
}
.title { margin: 60px 0 0; font-size: 48px; line-height: 58px; font-weight: 600; letter-spacing: -0.5px; }
.session { margin: 30px 0 0; font-size: 24px; line-height: 30px; color: #626c71; display: flex; gap: 32px; letter-spacing: -0.1px; }
.ring { width: 564px; height: 564px; margin-top: 86px; display: grid; place-items: center; }
.ring > * { grid-area: 1 / 1; }
.ring svg { width: 564px; height: 564px; }
.time { display: flex; font-family: Roboto, "Open Sans", sans-serif; font-size: 55px; font-weight: 600; line-height: 60px; padding-bottom: 4px; }
.digit { width: 36px; text-align: center; }
.controls { display: flex; gap: 32px; margin-top: 82px; }
.btn { height: 78px; border: 0; border-radius: 16px; padding: 2px 0 0; font-size: 28px; font-weight: 500; color: #13343b; letter-spacing: -0.1px; }
.start { width: 129px; background: #277f8b; color: #fcfcf9; }
.reset { width: 140px; background: #e2e0dc; }
.skip { width: 125px; background: transparent; border: 2px solid #d9d6d0; }
.task { width: 800px; height: 78px; margin-top: 64px; border: 2px solid #dedcd7; border-radius: 16px; background: #fffffd; text-align: center; font-size: 28px; padding: 2px 0 0; outline: 0; letter-spacing: -0.5px; }
.task::placeholder { color: #a9a9a9; opacity: 1; }

.dock {
  position: relative;
  flex: none;
  width: 2692px;
  height: 134px;
  margin: 4px 0 0 94px;
  padding: 18px 18px 0;
  border: 2px solid #757472;
  border-radius: 42px;
  background: linear-gradient(90deg, #575553 0, #575553 31%, #5a5457 33%, #575759 35%, #575553 42%, #575553 62%, #57565b 66%, #575553 72%);
  box-shadow: 0 0 76px rgba(0, 0, 0, .2);
  display: flex;
  gap: 28.2px;
}
.icon { position: relative; width: 84px; height: 84px; flex: none; border-radius: 19px; box-shadow: 0 1px 4px rgba(0, 0, 0, .3); }
.icon > svg { width: 84px; height: 84px; }
.running::after { content: ""; position: absolute; left: 38px; top: 102px; width: 8px; height: 8px; border-radius: 50%; background: #000; }
.launch { background: #c8c8c7; display: grid; place-items: center; }
.grid9 { display: grid; grid-template-columns: repeat(3, 16px); grid-auto-rows: 15px; gap: 5.5px 4.500px; }
.grid9 i { border-radius: 3.500px; }
.lime { background: linear-gradient(#7df25f, #2fd337); }
.amber { background: linear-gradient(#fdcb35, #f9ab2b); }
.orange { background: linear-gradient(#f7982a, #ee7429); }
.red { background: linear-gradient(#f03437, #b80d17); }
.steel { background: linear-gradient(#c8d6de, #7b7b7b); }
.pink { background: linear-gradient(#fb3a5f, #fc4e62); }
.violet { background: linear-gradient(#bd62e3, #8435b5); }
.blue { background: linear-gradient(#2bc5fa, #2362ee); }
.teal { background: linear-gradient(#54dcc8, #27b67c); }
.mail { background: linear-gradient(#2272ef, #2bc3fb); }
.facetime, .messages, .whatsapp { background: linear-gradient(#5ff37a, #26c03c); }
.safari { background: linear-gradient(#fff, #d8d8d9); }
.missing, .docs, .trash, .contacts { box-shadow: none; }
.maps { overflow: hidden; }
.icon > .wide { width: 90px; height: 84px; }
.calendar { background: #fbfaf9; overflow: hidden; text-align: center; }
.cal-head { height: 26px; background: linear-gradient(#fb5c55, #ec5048); color: #fff; font-size: 17px; line-height: 28px; font-weight: 600; }
.cal-day { font-size: 51px; line-height: 54px; font-weight: 300; color: #222; }
.reminders { background: linear-gradient(#fff, #f7f6f5); }
.podcasts { background: linear-gradient(#c763ee, #7a2bb4); }
.music { background: linear-gradient(#fc5d77, #f92a44); }
.tv { background: linear-gradient(#2b3b35, #0d1012); display: flex; align-items: center; justify-content: center; }
.icon > .tv-apple { width: 25px; height: 31px; margin-top: -4px; }
.tv-text { color: #fff; font-size: 37px; line-height: 40px; font-weight: 500; letter-spacing: -0.5px; margin-left: 3px; margin-top: -2px; }
.appstore { background: linear-gradient(#26b6f4, #1c60e0); }
.settings { background: linear-gradient(#d3e2ea, #918f8a); }
.badge { position: absolute; left: 59px; top: -10px; width: 39px; height: 40px; border-radius: 50%; background: #f04239; color: #fff; font-size: 22px; line-height: 40px; text-align: center; letter-spacing: -0.5px; box-shadow: 0 1px 3px rgba(0, 0, 0, .3); }
.sep { width: 2px; height: 98px; margin: -2px 8px 0 12px; background: #2c2b2a; flex: none; }
.sep2 { margin: -2px 9px 0 11px; }
.preview { background: #f1f0f0; }
.icon > .tall { width: 88px; height: 92px; }
.docs > .tall { width: 84px; }
.cards { box-shadow: none; }
.cards-tile { width: 80px; height: 80px; margin: 2px; border-radius: 17px; overflow: hidden; background: linear-gradient(#c3c8cb, #d7dcdf); }
.canva { background: linear-gradient(155deg, #22c3c8 15%, #2fb5d6 35%, #4a63dc 62%, #7b2fe4 88%); }
.canva span { display: block; text-align: center; color: #fff; font-family: "Liberation Serif", serif; font-style: italic; font-weight: 700; font-size: 29px; line-height: 80px; letter-spacing: -0.8px; }
.vscode { background: #fff; }
.pdf { font-size: 13px; fill: #6a6a6a; font-family: "Liberation Sans", sans-serif; letter-spacing: -0.5px; }
.trash > .bin { width: 84px; height: 100px; margin-top: -9px; }
</style>
